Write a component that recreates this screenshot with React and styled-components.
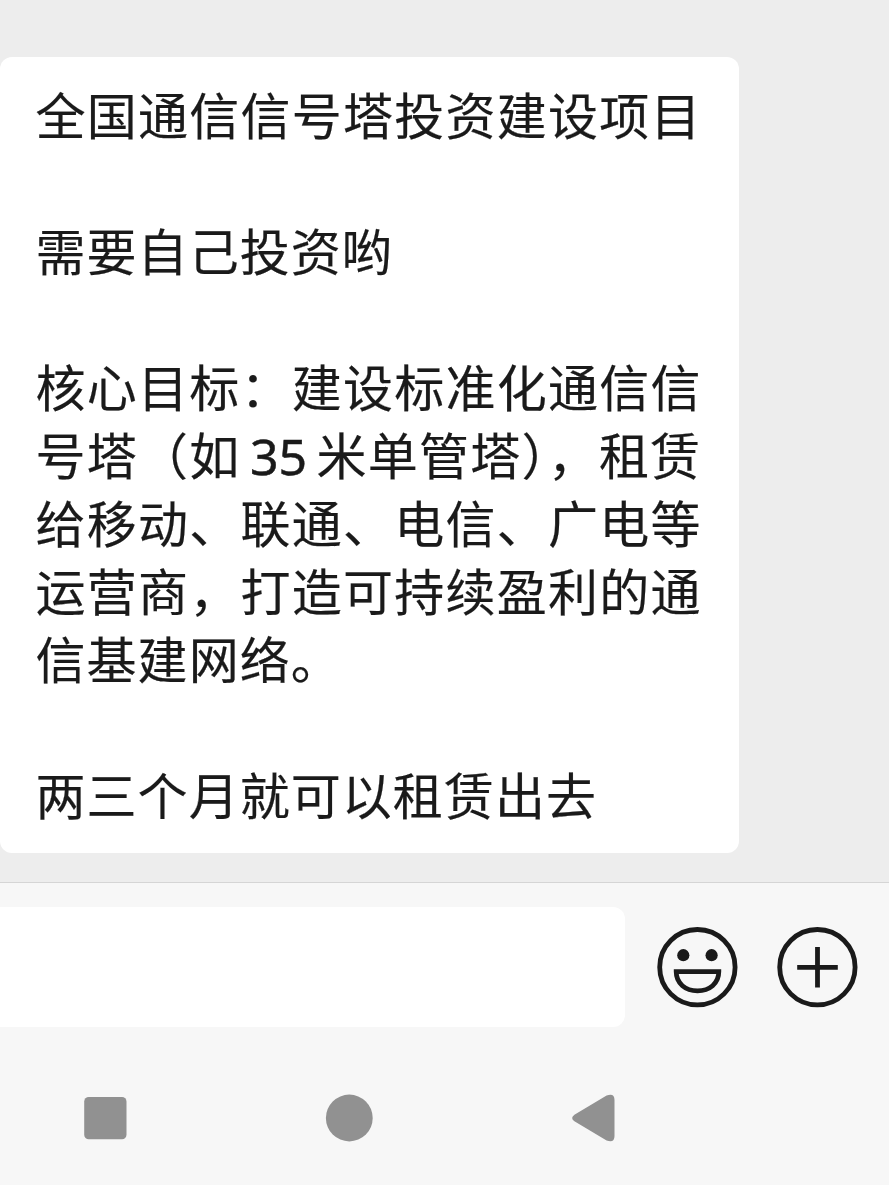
import React from 'react';

//Styling
import styled, {createGlobalStyle} from 'styled-components';

const GlobalStyle = createGlobalStyle`
  * {
    box-sizing: border-box;
  }

  body {
    margin: 0;
    background-color: #f7f7f7;
  }
`;

const Screen = styled.div`
  display: flex;
  flex-direction: column;
  height: 1185px;
  overflow: hidden;
  background-color: #f7f7f7;
  color: #1a1a1a;
`;

const Conversation = styled.main`
  height: 882px;
  padding-top: 57px;
  background-color: #ededed;
`;

const Bubble = styled.div`
  width: 739px;
  height: 796px;
  padding: 22px 0 0 35.5px;
  border-radius: 12px;
  background-color: #ffffff;
`;

const Line = styled.p`
  height: 68px;
  margin: 0;
  font-family: 'Noto Sans CJK SC', sans-serif;
  font-size: 50px;
  letter-spacing: ${props => (props.$full ? '1.25px' : '1.05px')};
  line-height: 68px;
  white-space: nowrap;
  -webkit-text-stroke: 0.2px #1a1a1a;
`;

const Figure = styled.span`
  font-family: 'Noto Sans', sans-serif;
  letter-spacing: 0;
  word-spacing: -3.6px;
  -webkit-text-stroke: 0.5px #1a1a1a;
`;

const InputBar = styled.div`
  display: flex;
  align-items: center;
  height: 168px;
  border-top: 1px solid #d5d5d5;
`;

const TextInput = styled.div`
  flex: none;
  width: 625px;
  height: 120px;
  margin-right: 32px;
  border-radius: 0 12px 12px 0;
  background-color: #ffffff;
`;

const IconButton = styled.button`
  flex: none;
  width: 80px;
  height: 80px;
  margin-right: 40px;
  padding: 0;
  border: 0;
  background: none;
  color: inherit;

  svg {
    display: block;
    overflow: visible;
  }
`;

const NavBar = styled.nav`
  display: flex;
  align-items: center;
  height: 135px;
  padding-left: 83px;
`;

const NavIcon = styled.svg`
  flex: none;
  width: 48px;
  height: 48px;
  margin-right: 196px;
  overflow: visible;
  fill: #919191;
`;

//An empty string is a blank line between paragraphs
const message = [
  {text: '全国通信信号塔投资建设项目', full: true},
  {text: ''},
  {text: '需要自己投资哟'},
  {text: ''},
  {text: '核心目标：建设标准化通信信', full: true},
  {
    text: (
      <>
        号塔（如<Figure> 35 </Figure>米单管塔），租赁
      </>
    ),
    full: true,
  },
  {text: '给移动、联通、电信、广电等', full: true},
  {text: '运营商，打造可持续盈利的通', full: true},
  {text: '信基建网络。'},
  {text: ''},
  {text: '两三个月就可以租赁出去'},
];

const SmileIcon = () => (
  <svg width="80" height="80" viewBox="0 0 80 80" fill="none" stroke="currentColor">
    <circle cx="40.4" cy="40.2" r="37.7" strokeWidth="4.8" />
    <circle cx="26.3" cy="28.2" r="6.1" fill="currentColor" stroke="none" />
    <circle cx="54.6" cy="28.2" r="6.1" fill="currentColor" stroke="none" />
    <path d="M19.2 44.6h42.6c0 12-9.4 19.2-21.3 19.2S19.2 56.6 19.2 44.6z" strokeWidth="4.8" />
  </svg>
);

const PlusIcon = () => (
  <svg width="80" height="80" viewBox="0 0 80 80" fill="none" stroke="currentColor">
    <circle cx="40.4" cy="40.2" r="37.7" strokeWidth="4.8" />
    <path d="M40.5 20v40.4M20.2 40.3h40.6" strokeWidth="4.8" />
  </svg>
);

const App = () => (
  <Screen>
    <GlobalStyle />
    <Conversation>
      <Bubble>
        {message.map((line, i) => (
          <Line key={i} $full={line.full}>
            {line.text}
          </Line>
        ))}
      </Bubble>
    </Conversation>
    <InputBar>
      <TextInput />
      <IconButton aria-label="表情">
        <SmileIcon />
      </IconButton>
      <IconButton aria-label="更多">
        <PlusIcon />
      </IconButton>
    </InputBar>
    <NavBar>
      <NavIcon viewBox="0 0 48 48">
        <rect x="1.2" y="3" width="42.3" height="42.2" rx="4.5" />
      </NavIcon>
      <NavIcon viewBox="0 0 48 48">
        <circle cx="22.3" cy="24" r="23.4" />
      </NavIcon>
      <NavIcon viewBox="0 0 48 48">
        <path d="M3.4 20.7L35.6 1.5Q43.5-1.3 43.5 6v36q0 7.300-7.900 4.500L3.400 27.300q-4.500-3.300 0-6.600z" />
      </NavIcon>
    </NavBar>
  </Screen>
);

export default App;
